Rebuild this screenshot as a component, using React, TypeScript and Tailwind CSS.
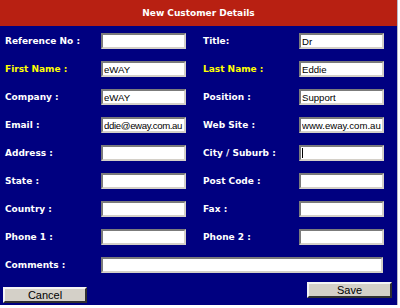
const inputBase =
  "h-[16px] bg-white border-2 border-t-[#7b7b7b] border-l-[#7b7b7b] border-b-[#d4d0c8] border-r-[#d4d0c8] px-[1px] text-[9.6px] leading-none font-normal text-black font-['Liberation_Sans',Arial,sans-serif] outline-none";

function Field({
  label,
  value = "",
  yellow = false,
  caret = false,
  tight = false,
}: {
  label: string;
  value?: string;
  yellow?: boolean;
  caret?: boolean;
  tight?: boolean;
}) {
  return (
    <div className="flex items-center">
      <span
        className={`w-[96px] shrink-0 pt-[1px] ${yellow ? "text-[#ffff00]" : "text-white"}`}
      >
        {label}
      </span>
      <div className="relative">
        <input
          readOnly
          value={value}
          className={`${inputBase} w-[85px] ${tight ? "tracking-[-0.35px]" : ""}`}
        />
        {caret && (
          <span className="absolute left-[3px] top-[3px] h-[10px] w-px bg-black" />
        )}
      </div>
    </div>
  );
}

type F = { label: string; value?: string; yellow?: boolean; caret?: boolean; tight?: boolean };

const rows: [F, F][] = [
  [{ label: "Reference No :" }, { label: "Title:", value: "Dr" }],
  [
    { label: "First Name :", value: "eWAY", yellow: true },
    { label: "Last Name :", value: "Eddie", yellow: true },
  ],
  [
    { label: "Company :", value: "eWAY" },
    { label: "Position :", value: "Support" },
  ],
  [
    { label: "Email :", value: "ddie@eway.com.au", tight: true },
    { label: "Web Site :", value: "www.eway.com.au" },
  ],
  [{ label: "Address :" }, { label: "City / Suburb :", caret: true }],
  [{ label: "State :" }, { label: "Post Code :" }],
  [{ label: "Country :" }, { label: "Fax :" }],
  [{ label: "Phone 1 :" }, { label: "Phone 2 :" }],
];

const buttonBase =
  "h-[16px] bg-[#d4d0c8] border-2 border-t-[#f4f4f4] border-l-[#f4f4f4] border-b-[#303030] border-r-[#303030] text-[11px] leading-none font-normal text-black font-['Liberation_Sans',Arial,sans-serif]";

export default function App() {
  return (
    <div className="w-[400px] h-[308px] bg-white">
      <div className="w-[398px] h-[305px] bg-[#000080] border-r border-[#b8b8c8] flex flex-col font-['DejaVu_Sans',Verdana,sans-serif] font-bold text-[9px]">
        <div className="h-[26px] bg-[#b82012] flex items-center justify-center pt-[2px] text-white">
          New Customer Details
        </div>
        <div className="flex flex-col gap-[12px] pt-[7px] pl-[5px]">
          {rows.map(([a, b]) => (
            <div key={a.label} className="flex gap-[17px]">
              <Field {...a} />
              <Field {...b} />
            </div>
          ))}
          <div className="flex items-center">
            <span className="w-[96px] shrink-0 pt-[1px] text-white">Comments :</span>
            <input readOnly className={`${inputBase} w-[282px]`} />
          </div>
        </div>
        <div className="flex justify-between items-start pl-[3px] pr-[5px]">
          <button className={`${buttonBase} w-[84px] mt-[14px]`}>Cancel</button>
          <button className={`${buttonBase} w-[85px] mt-[9px]`}>Save</button>
        </div>
      </div>
    </div>
  );
}
